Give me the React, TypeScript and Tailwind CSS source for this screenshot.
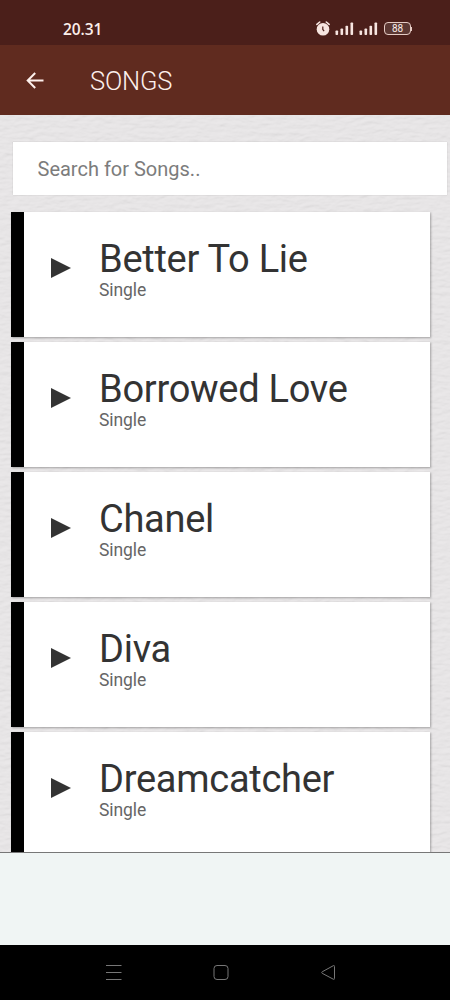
import * as React from "react";

interface Song {
  title: string;
  album: string;
}

const SONGS: Song[] = [
  { title: "Better To Lie", album: "Single" },
  { title: "Borrowed Love", album: "Single" },
  { title: "Chanel", album: "Single" },
  { title: "Diva", album: "Single" },
  { title: "Dreamcatcher", album: "Single" },
];

function AlarmIcon() {
  return (
    <svg width="14" height="15" viewBox="0 0 14 15" fill="none">
      <circle cx="7" cy="8.2" r="6.3" fill="#f7e5e0" />
      <path d="M0.9 3.4 3.7 1M13.1 3.4 10.3 1" stroke="#f7e5e0" strokeWidth="1.6" strokeLinecap="round" />
      <path d="M6.8 5.6v2.9l1.3 1.6" stroke="#4b1f1a" strokeWidth="1.2" />
    </svg>
  );
}

function SignalIcon() {
  return (
    <svg width="19" height="14" viewBox="0 0 19 14" fill="#f7e5e0">
      <rect x="0.5" y="8.5" width="2.6" height="4.5" rx="0.8" />
      <rect x="5.5" y="6.5" width="2.6" height="6.5" rx="0.8" />
      <rect x="10.5" y="3.7" width="2.6" height="9.3" rx="0.8" />
      <rect x="15.5" y="0.5" width="2.6" height="12.5" rx="0.8" />
    </svg>
  );
}

function StatusBar() {
  return (
    <div className="flex h-[45px] shrink-0 items-center bg-[#4b1f1a] pt-3 pr-[38px] pl-[63px] text-[#fbeeea]">
      <span className="font-['Open_Sans',sans-serif] text-[15.5px] leading-5 font-semibold tracking-[-0.1px]">20.31</span>
      <div className="ml-auto flex items-center">
        <AlarmIcon />
        <div className="ml-[5px] flex gap-[5px]">
          <SignalIcon />
          <SignalIcon />
        </div>
        <div className="ml-[6px] flex h-[13px] w-[27px] items-center justify-center rounded-[4px] border border-[#e5cbc4] bg-[#5c3833] text-[10px] leading-none">
          88
        </div>
        <div className="h-1 w-px bg-[#e5cbc4]" />
      </div>
    </div>
  );
}

function Header() {
  return (
    <header className="flex h-[70px] shrink-0 items-center bg-[#602b1f] pl-[26px] text-[#fdf0ec]">
      <svg width="18" height="18" viewBox="0 0 18 18" fill="none" stroke="currentColor" strokeWidth="2">
        <path d="M17.5 9.5H2M9.2 2 1.7 9.5l7.5 7.5" />
      </svg>
      <h1 className="ml-[46px] pt-0.5 text-[25.5px] leading-8 font-light tracking-[-0.15px]">SONGS</h1>
    </header>
  );
}

// Embossed paper grain behind the list
function PaperTexture() {
  return (
    <svg className="absolute inset-0 h-full w-full">
      <filter id="paper" x="0" y="0" width="100%" height="100%" colorInterpolationFilters="sRGB">
        <feTurbulence type="fractalNoise" baseFrequency="0.1 0.25" numOctaves="3" seed="8" result="noise" />
        <feDiffuseLighting in="noise" surfaceScale="0.35" diffuseConstant="1.015" lightingColor="#e7e5e6">
          <feDistantLight azimuth="250" elevation="80" />
        </feDiffuseLighting>
      </filter>
      <rect width="100%" height="100%" fill="#e7e5e6" filter="url(#paper)" />
    </svg>
  );
}

function SongCard({ song }: { song: Song }) {
  return (
    <li className="flex h-[125px] w-[419px] border-l-[13px] border-black bg-white shadow-[1px_1px_2px_rgba(0,0,0,0.3)]">
      <svg className="mt-[46px] ml-[27px]" width="20" height="20" viewBox="0 0 20 20" fill="#333333">
        <path d="M0 0 20 10 0 20z" />
      </svg>
      <div className="ml-7 pt-[25px]">
        <p className="text-[38px] leading-[44px] tracking-[-0.27px] whitespace-nowrap text-[#333333]">{song.title}</p>
        <p className="-mt-px text-[17.5px] leading-5 tracking-[-0.1px] text-[#666666]">{song.album}</p>
      </div>
    </li>
  );
}

function NavBar() {
  return (
    <nav className="flex h-[55px] shrink-0 items-center bg-black pl-[106px] text-[#777777]">
      <svg width="16" height="16" viewBox="0 0 16 16" fill="none" stroke="currentColor">
        <path d="M0 0.5h15.5M0 7.5h15.5M0 14.5h15.5" />
      </svg>
      <svg className="ml-[91px]" width="16" height="16" viewBox="0 0 16 16" fill="none" stroke="currentColor">
        <rect x="1" y="0.5" width="14" height="14" rx="3" />
      </svg>
      <svg className="ml-[91px]" width="16" height="16" viewBox="0 0 16 16" fill="none" stroke="currentColor" strokeLinejoin="round">
        <path d="M14.5 1.5v12q0 1.3-1.2.7L2.2 8.3q-1-.8 0-1.5L13.3 .7q1.2-.6 1.2.8z" />
      </svg>
    </nav>
  );
}

export default function App() {
  const [query, setQuery] = React.useState("");
  const songs = SONGS.filter((s) => s.title.toLowerCase().includes(query.toLowerCase()));

  return (
    <div className="flex h-[1000px] w-[450px] flex-col overflow-hidden bg-black font-['Roboto',sans-serif]">
      <StatusBar />
      <Header />
      <main className="relative h-[737px] shrink-0 overflow-hidden bg-[#e7e5e6]">
        <PaperTexture />
        <div className="relative pt-[27px] pl-[11px]">
          <input
            value={query}
            onChange={(e) => setQuery(e.target.value)}
            placeholder="Search for Songs.."
            className="ml-[1.5px] block h-[53px] w-[434.5px] bg-white px-[25px] text-[20px] text-[#333333] shadow-[0_0_1px_rgba(0,0,0,0.2)] outline-none placeholder:text-[#7c7c7c]"
          />
          <ul className="mt-[17px] flex flex-col gap-[5px]">
            {songs.map((song) => (
              <SongCard key={song.title} song={song} />
            ))}
          </ul>
        </div>
      </main>
      <div className="h-[93px] shrink-0 border-t border-[#777777] bg-[#f0f5f4]" />
      <NavBar />
    </div>
  );
}
